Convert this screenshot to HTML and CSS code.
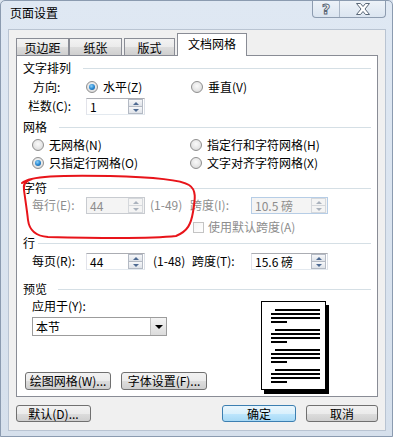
FILE: index.html
```html
<!DOCTYPE html>
<html>
<head>
<meta charset="utf-8">
<link rel="stylesheet" href="styles.css">
</head>
<body>
<div class="window">
  <div class="titlebar">
    <span class="title">页面设置</span>
    <div class="caption">
      <div class="cbtn help">?</div>
      <div class="cbtn close">
        <svg width="16" height="12" viewBox="0 0 16 12"><path d="M1.5 0.5 H5.5 L8 3.5 L10.5 0.5 H14.5 L10 6 L14.5 11.5 H10.5 L8 8.5 L5.5 11.5 H1.5 L6 6 Z" fill="#fff" stroke="#5a6878" stroke-width="1"/></svg>
      </div>
    </div>
  </div>
  <div class="client">
    <div class="tabs">
      <div class="tab t1">页边距</div>
      <div class="tab t2">纸张</div>
      <div class="tab t3">版式</div>
      <div class="tab active">文档网格</div>
    </div>
    <div class="panel">
      <div class="ghead g1"><span>文字排列</span><i></i></div>
      <div class="row r-dir">
        <span class="lbl l-dir">方向:</span>
        <label class="opt o-w105"><span class="radio on"></span>水平(Z)</label>
        <label class="opt"><span class="radio"></span>垂直(V)</label>
      </div>
      <div class="row r-cols">
        <span class="lbl l-cols">栏数(C):</span>
        <div class="spin s-short"><span class="val">1</span><div class="sbtns"><span class="sb up"></span><span class="sb dn"></span></div></div>
      </div>
      <div class="ghead g2"><span>网格</span><i></i></div>
      <div class="row r-g1">
        <label class="opt o-w159"><span class="radio"></span>无网格(N)</label>
        <label class="opt"><span class="radio"></span>指定行和字符网格(H)</label>
      </div>
      <div class="row r-g2">
        <label class="opt o-w159"><span class="radio on"></span>只指定行网格(O)</label>
        <label class="opt"><span class="radio"></span>文字对齐字符网格(X)</label>
      </div>
      <div class="ghead g3"><span>字符</span><i></i></div>
      <div class="row r-chars dis">
        <span class="lbl l-std">每行(E):</span>
        <div class="spin s-short off"><span class="val">44</span><div class="sbtns"><span class="sb up"></span><span class="sb dn"></span></div></div>
        <span class="range rg1">(1-49)</span>
        <span class="lbl l-span">跨度(I):</span>
        <div class="spin s-long off blue"><span class="val">10.5 磅</span><div class="sbtns"><span class="sb up"></span><span class="sb dn"></span></div></div>
      </div>
      <div class="row r-chk dis">
        <label class="opt"><span class="check"></span>使用默认跨度(A)</label>
      </div>
      <div class="ghead g4"><span>行</span><i></i></div>
      <div class="row r-lines">
        <span class="lbl l-std">每页(R):</span>
        <div class="spin s-short"><span class="val">44</span><div class="sbtns"><span class="sb up"></span><span class="sb dn"></span></div></div>
        <span class="range rg2">(1-48)</span>
        <span class="lbl l-span2">跨度(T):</span>
        <div class="spin s-long"><span class="val">15.6 磅</span><div class="sbtns"><span class="sb up"></span><span class="sb dn"></span></div></div>
      </div>
      <div class="ghead g5"><span>预览</span><i></i></div>
      <div class="preview">
        <div class="pleft">
          <div class="lbl l-apply">应用于(Y):</div>
          <div class="select"><span class="val">本节</span><span class="dd"></span></div>
          <div class="pbtns">
            <div class="btn b-draw">绘图网格(W)...</div>
            <div class="btn b-font">字体设置(F)...</div>
          </div>
        </div>
        <div class="page">
          <div class="para"><i class="ln first"></i><i class="ln"></i><i class="ln"></i><i class="ln short"></i></div>
          <div class="para"><i class="ln first"></i><i class="ln"></i><i class="ln"></i><i class="ln short"></i></div>
          <div class="para"><i class="ln first"></i><i class="ln"></i><i class="ln"></i><i class="ln short"></i></div>
          <div class="para"><i class="ln first"></i><i class="ln"></i><i class="ln"></i><i class="ln short"></i></div>
        </div>
      </div>
    </div>
    <div class="footer">
      <div class="btn b-def">默认(D)...</div>
      <div class="spacer"></div>
      <div class="btn b-ok">确定</div>
      <div class="btn b-cancel">取消</div>
    </div>
  </div>
  <svg class="annot" width="393" height="437" viewBox="0 0 393 437">
    <path d="M22 183 C30 176, 60 175, 110 176 C150 177, 180 179, 189 185 C197 190, 195 200, 193 212 C191 224, 188 231, 176 236 C150 239, 90 238, 48 237 C34 236, 29 228, 28 220 C27 210, 25 198, 24 190 C23 185, 25 181, 32 179" fill="none" stroke="#e8141a" stroke-width="2" stroke-linecap="round"/>
  </svg>
</div>
</body>
</html>
```
FILE: styles.css
```css
* { box-sizing: border-box; }
html, body { margin: 0; padding: 0; }
body {
  font-family: "Noto Sans CJK SC", "Liberation Sans", sans-serif;
  font-size: 12px;
  line-height: 14px;
  color: #000;
  background: #dbe4ef;
}
.window {
  position: relative;
  width: 393px;
  height: 437px;
  background: linear-gradient(#dfe8f3, #d6e0ec);
  border: 1px solid #8b9bb0;
  border-radius: 5px 5px 0 0;
  overflow: hidden;
}
.titlebar {
  height: 28px;
  display: flex;
  justify-content: space-between;
  align-items: flex-start;
}
.title {
  padding: 5px 0 0 9px;
  font-size: 12px;
  color: #000;
}
.caption {
  display: flex;
  margin-top: -1px;
  margin-right: 6px;
  height: 18px;
  border: 1px solid #8d9cb0;
  border-top: none;
  border-radius: 0 0 4px 4px;
  background: linear-gradient(#eef3f9, #dbe5f0);
  overflow: hidden;
}
.cbtn {
  height: 17px;
  display: flex;
  align-items: center;
  justify-content: center;
}
.help {
  width: 27px;
  border-right: 1px solid #a9b6c6;
  font-family: "DejaVu Sans", sans-serif;
  font-size: 14px;
  font-weight: bold;
  color: #fff;
  -webkit-text-stroke: 1px #5a6878;
}
.close { width: 45px; }
.client {
  margin: 0 6px 0 7px;
  height: 402px;
  background: #f0f0f0;
  border: 1px solid #b9c4d2;
  padding: 3px 7px 0 7px;
}
.tabs {
  display: flex;
  align-items: flex-end;
  height: 22px;
  position: relative;
  z-index: 2;
}
.tab {
  height: 17px;
  border: 1px solid #898c95;
  border-bottom: none;
  background: linear-gradient(#f3f3f3 0%, #ebebeb 50%, #dddddd 51%, #cfcfcf 100%);
  text-align: center;
  padding-top: 2px;
  color: #000;
}
.t1 { width: 53px; }
.t2 { width: 53px; margin-left: 0; }
.t3 { width: 51px; margin-left: 2px; }
.tab.active {
  width: 70px;
  height: 23px;
  margin-left: 2px;
  margin-bottom: -1px;
  background: #fff;
  padding-top: 3px;
}
.panel {
  width: 362px;
  height: 342px;
  border: 1px solid #898c95;
  background: #fff;
  padding: 5px 6px 0 6px;
  position: relative;
  z-index: 1;
}
.ghead {
  display: flex;
  align-items: center;
  height: 14px;
}
.ghead i {
  flex: 1;
  height: 1px;
  background: #d5dfe5;
  margin-left: 12px;
}
.g2 { margin-top: 5px; }
.g3 { margin-top: 9px; }
.g3 i { margin-left: 11px; }
.g4 { margin-top: 0; }
.g4 i { margin-left: 3px; }
.g5 { margin-top: 12px; }
.g5 i { margin-left: 11px; }
.row {
  display: flex;
  align-items: center;
  height: 18px;
}
.r-dir { margin-top: 3px; }
.r-cols { margin-top: 1px; }
.r-g1 { margin-top: 2px; }
.r-g2 { margin-top: 0; }
.r-chars { margin-top: 1px; }
.r-chk { margin-top: 4px; }
.r-lines { margin-top: 2px; }
.lbl { white-space: nowrap; }
.l-dir { width: 63px; padding-left: 10px; }
.l-cols { width: 63px; padding-left: 5px; }
.l-std { width: 63px; padding-left: 9px; }
.range { white-space: nowrap; }
.rg1 { margin-left: 5px; width: 34px; }
.rg2 { margin-left: 8px; width: 33px; }
.l-span { width: 61px; margin-left: 6px; }
.l-span2 { width: 59px; margin-left: 6px; }
.opt {
  display: flex;
  align-items: center;
  white-space: nowrap;
}
.o-w105 { width: 105px; }
.r-g1, .r-g2 { padding-left: 9px; }
.o-w159 { width: 158px; }
.r-chk { padding-left: 170px; }
.radio {
  width: 12px;
  height: 12px;
  border: 1px solid #8f8f8f;
  border-radius: 50%;
  background: radial-gradient(circle at 50% 40%, #fafafa 0%, #e6e6e6 55%, #cfcfcf 100%);
  margin-right: 5px;
  position: relative;
  flex: none;
}
.radio.on::after {
  content: "";
  position: absolute;
  left: 2px;
  top: 2px;
  width: 6px;
  height: 6px;
  border-radius: 50%;
  background: radial-gradient(circle at 40% 35%, #8fd2f7 0%, #2a8ad4 50%, #134e86 100%);
}
.check {
  width: 11px;
  height: 11px;
  border: 1px solid #c4c4c4;
  background: linear-gradient(135deg, #f4f4f4, #ffffff);
  margin-right: 4px;
  flex: none;
}
.dis { color: #8d8d8d; }
.spin {
  display: flex;
  justify-content: space-between;
  align-items: stretch;
  height: 17px;
  border: 1px solid #abadb3;
  border-color: #abadb3 #dbdfe6 #e3e9ef #e2e3ea;
  background: #fff;
  flex: none;
}
.s-short { width: 59px; }
.s-long { width: 77px; }
.spin .val {
  padding: 1px 0 0 3px;
  line-height: 14px;
}
.spin.off { background: #f4f4f4; color: #8d8d8d; border-color: #c8cbd0; }
.spin.blue { border-color: #b6cde6; }
.sbtns {
  width: 15px;
  display: flex;
  flex-direction: column;
  margin: 0 1px 0 0;
}
.sb {
  flex: 1;
  position: relative;
  border: 1px solid #b4bac4;
  background: linear-gradient(#f6f7f9, #dfe3e9);
}
.sb.dn { border-top: none; }
.sb::after {
  content: "";
  position: absolute;
  left: 4px;
  width: 0;
  height: 0;
  border-left: 3px solid transparent;
  border-right: 3px solid transparent;
}
.sb.up::after { top: 2px; border-bottom: 3px solid #4e6a92; }
.sb.dn::after { top: 2px; border-top: 3px solid #4e6a92; }
.off .sb { border-color: #d5d8dc; background: #f4f4f4; }
.off .sb.up::after { border-bottom-color: #aab2bd; }
.off .sb.dn::after { border-top-color: #aab2bd; }
.preview {
  display: flex;
}
.pleft {
  width: 238px;
  display: flex;
  flex-direction: column;
}
.l-apply { padding-left: 9px; margin-top: 3px; height: 14px; }
.select {
  margin-top: 4px;
  margin-left: 9px;
  width: 135px;
  height: 19px;
  border: 1px solid #9c9c9c;
  background: #fff;
  display: flex;
  justify-content: space-between;
  align-items: center;
}
.select .val { padding-left: 3px; }
.dd {
  width: 16px;
  height: 17px;
  border-left: 1px solid #c0c0c0;
  background: linear-gradient(#f4f4f4, #dcdcdc);
  position: relative;
}
.dd::after {
  content: "";
  position: absolute;
  left: 4px;
  top: 7px;
  border-left: 4px solid transparent;
  border-right: 4px solid transparent;
  border-top: 4px solid #000;
}
.pbtns {
  display: flex;
  margin-top: 36px;
  margin-left: 2px;
  gap: 10px;
}
.btn {
  height: 18px;
  border: 1px solid #707070;
  border-radius: 3px;
  background: linear-gradient(#f2f2f2 0%, #ebebeb 50%, #dddddd 51%, #cfcfcf 100%);
  display: flex;
  align-items: center;
  justify-content: center;
  white-space: nowrap;
  line-height: 14px;
}
.b-draw { width: 86px; }
.b-font { width: 86px; }
.page {
  margin-top: 5px;
  width: 65px;
  height: 89px;
  border: 1px solid #000;
  background: #fff;
  box-shadow: 3px 4px 0 #000;
  padding: 7px 5px 0 9px;
}
.para { height: 20px; }
.ln {
  display: block;
  height: 2px;
  background: #000;
  margin-bottom: 2px;
}
.ln.first { margin-left: 4px; }
.ln.short { width: 16px; }
.footer {
  display: flex;
  margin-top: 8px;
}
.footer .btn { height: 17px; }
.spacer { flex: 1; }
.b-def { width: 75px; }
.b-ok {
  width: 74px;
  border-color: #3c7fb1;
  background: linear-gradient(#eaf6fd 0%, #d9f0fc 50%, #bee6fd 51%, #a7d9f5 100%);
  margin-right: 10px;
}
.b-cancel { width: 72px; }
.annot {
  position: absolute;
  left: -1px;
  top: -1px;
  pointer-events: none;
  z-index: 5;
}
```
